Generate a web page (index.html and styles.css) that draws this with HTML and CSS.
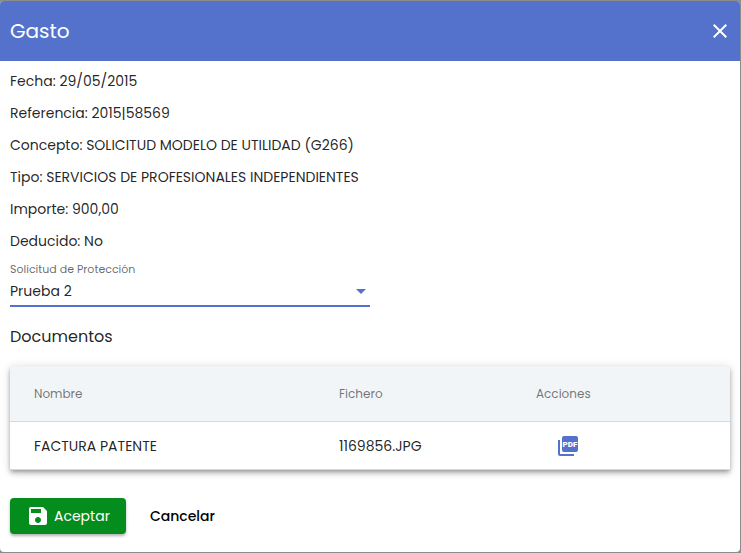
FILE: index.html
```html
<!DOCTYPE html>
<html lang="es">
<head>
<meta charset="utf-8">
<meta name="viewport" content="width=device-width, initial-scale=1">
<title>Gasto</title>
<link rel="stylesheet" href="styles.css">
</head>
<body>
<main class="dialog" role="dialog" aria-labelledby="dialog-title">
  <header class="dialog-header">
    <h1 id="dialog-title">Gasto</h1>
    <button class="close" type="button" aria-label="Cerrar">
      <svg viewBox="0 0 24 24" width="24" height="24"><path d="M19 6.41L17.59 5 12 10.59 6.41 5 5 6.41 10.59 12 5 17.59 6.41 19 12 13.41 17.59 19 19 17.59 13.41 12z"/></svg>
    </button>
  </header>
  <form class="dialog-body">
    <div class="details">
      <p>Fecha: 29/05/2015</p>
      <p>Referencia: 2015|58569</p>
      <p>Concepto: SOLICITUD MODELO DE UTILIDAD (G266)</p>
      <p>Tipo: SERVICIOS DE PROFESIONALES INDEPENDIENTES</p>
      <p>Importe: 900,00</p>
      <p>Deducido: No</p>
    </div>
    <div class="field">
      <label for="solicitud">Solicitud de Protección</label>
      <div class="select-wrap">
        <select id="solicitud"><option>Prueba 2</option></select>
        <svg class="arrow" viewBox="0 0 10 5" width="10" height="5"><path d="M0 0h10L5 5z"/></svg>
      </div>
    </div>
    <h2>Documentos</h2>
    <table class="documents">
      <thead>
        <tr><th class="name">Nombre</th><th class="file">Fichero</th><th>Acciones</th></tr>
      </thead>
      <tbody>
        <tr>
          <td>FACTURA PATENTE</td>
          <td>1169856.JPG</td>
          <td class="actions">
            <button class="pdf" type="button" aria-label="Ver documento">
              <svg viewBox="0 0 24 24" width="24" height="24">
                <path d="M8 2h12q2 0 2 2v12q0 2-2 2H8q-2 0-2-2V4q0-2 2-2zM4 6H2v14q0 2 2 2h14v-2H4z"/>
                <text class="pdf-text" x="14" y="13" text-anchor="middle">PDF</text>
              </svg>
            </button>
          </td>
        </tr>
      </tbody>
    </table>
    <div class="buttons">
      <button class="accept" type="button">
        <svg viewBox="0 0 24 24" width="24" height="24"><path d="M17 3H5c-1.11 0-2 .9-2 2v14c0 1.1.89 2 2 2h14c1.1 0 2-.9 2-2V7l-4-4zm-5 16c-1.66 0-3-1.34-3-3s1.34-3 3-3 3 1.34 3 3-1.34 3-3 3zm3-10H5V5h10v4z"/></svg>
        <span>Aceptar</span>
      </button>
      <button class="cancel" type="button">Cancelar</button>
    </div>
  </form>
</main>
</body>
</html>
```
FILE: styles.css
```css
* {
  box-sizing: border-box;
}

body {
  margin: 0;
  padding: 1px 1px 1px 0;
  min-height: 100vh;
  background: #8c8c8c;
  color: rgba(0, 0, 0, 0.87);
  font: 14px/20px Poppins, Inter, sans-serif;
}

button,
select {
  font: inherit;
  border: 0;
  background: none;
  padding: 0;
  cursor: pointer;
}

svg {
  display: block;
  fill: currentColor;
}

h1,
h2,
p {
  margin: 0;
  font-weight: 400;
}

.dialog {
  background: #fff;
  border-radius: 4px;
  overflow: hidden;
}

.dialog-header {
  display: flex;
  align-items: center;
  justify-content: space-between;
  height: 60px;
  padding: 0 8px 0 10px;
  background: #5472cc;
  color: #fff;
}

h1 {
  font-size: 20px;
  line-height: 32px;
}

.close {
  color: #fff;
}

.dialog-body {
  padding: 4px 10px 18px;
}

.details p {
  line-height: 32px;
}

.field {
  width: 50%;
  padding-top: 4px;
}

.field label {
  display: block;
  color: rgba(0, 0, 0, 0.6);
  font-size: 11px;
  line-height: 16px;
}

.select-wrap {
  display: flex;
  align-items: center;
  position: relative;
  border-bottom: 2px solid #5472cc;
}

.select-wrap select {
  appearance: none;
  width: 100%;
  height: 28px;
  color: rgba(0, 0, 0, 0.87);
}

.arrow {
  position: absolute;
  right: 4px;
  color: #5472cc;
  pointer-events: none;
}

h2 {
  margin: 14px 0 13px;
  font-size: 16px;
  line-height: 32px;
}

.documents {
  width: 100%;
  border-collapse: separate;
  border-spacing: 0;
  table-layout: fixed;
  text-align: left;
  box-shadow: 0 2px 4px -1px rgba(0, 0, 0, 0.3), 0 4px 5px rgba(0, 0, 0, 0.14), 0 1px 10px rgba(0, 0, 0, 0.12);
}

th,
td {
  padding: 0;
  border-bottom: 1px solid #d6d8da;
}

th {
  height: 56px;
  background: #f1f5f8;
  color: rgba(0, 0, 0, 0.54);
  font-size: 12px;
  font-weight: 400;
}

td {
  height: 48px;
}

th:first-child,
td:first-child {
  padding-left: 24px;
}

.name {
  width: 329px;
}

.file {
  width: 197px;
}

.actions {
  padding-left: 20px;
}

.pdf {
  display: block;
  color: #5472cc;
}

.pdf-text {
  fill: #fff;
  font: 900 8px Roboto, sans-serif;
}

.buttons {
  display: flex;
  align-items: center;
  gap: 24px;
  margin-top: 28px;
}

.accept {
  display: flex;
  align-items: center;
  gap: 4px;
  height: 36px;
  padding: 0 16px;
  border-radius: 4px;
  background: #048c1c;
  color: #fff;
  box-shadow: 0 2px 3px rgba(0, 0, 0, 0.3);
}

.cancel {
  color: #000;
  font-weight: 500;
}
```
